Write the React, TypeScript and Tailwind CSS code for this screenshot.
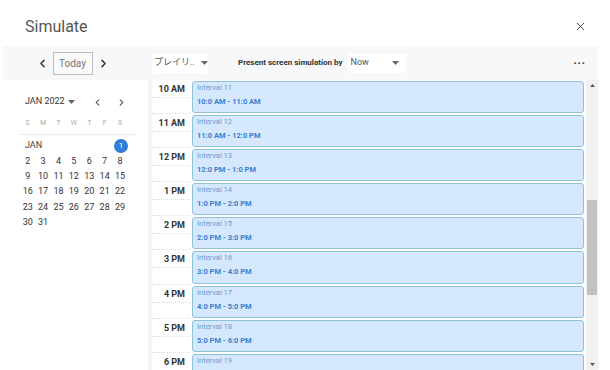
import { ChevronLeft, ChevronRight, X } from 'lucide-react';

const hours = ['10 AM', '11 AM', '12 PM', '1 PM', '2 PM', '3 PM', '4 PM', '5 PM', '6 PM'];
// last slot's time text falls below the fold, so it is left empty
const ranges = [
  '10:0 AM - 11:0 AM',
  '11:0 AM - 12:0 PM',
  '12:0 PM - 1:0 PM',
  '1:0 PM - 2:0 PM',
  '2:0 PM - 3:0 PM',
  '3:0 PM - 4:0 PM',
  '4:0 PM - 5:0 PM',
  '5:0 PM - 6:0 PM',
  '',
];

const weeks = [
  [2, 3, 4, 5, 6, 7, 8],
  [9, 10, 11, 12, 13, 14, 15],
  [16, 17, 18, 19, 20, 21, 22],
  [23, 24, 25, 26, 27, 28, 29],
  [30, 31],
];

function Caret() {
  return (
    <svg width="7" height="4" viewBox="0 0 7 4" className="fill-[#666]">
      <path d="M0 0h7L3.5 4z" />
    </svg>
  );
}

function MiniCalendar() {
  return (
    <div className="w-[145px] shrink-0 bg-white pt-[16px] pl-[14px] pr-[12px]">
      {/* month + arrows */}
      <div className="flex items-center h-[12px]">
        <span className="pl-[8px] text-[9px] text-[#333]">JAN 2022</span>
        <span className="ml-[3px]"><Caret /></span>
        <ChevronLeft className="ml-auto mr-[13px] w-[11px] h-[11px] text-[#333]" strokeWidth={2.2} />
        <ChevronRight className="mr-[9px] w-[11px] h-[11px] text-[#333]" strokeWidth={2.2} />
      </div>
      <div className="mt-[10px] ml-[2px] pl-[1px] pb-[5px] border-b border-[#ececec] grid grid-cols-[repeat(7,15.4px)] text-[7px] text-[#aaa]">
        {['S', 'M', 'T', 'W', 'T', 'F', 'S'].map((d, i) => (
          <span key={i} className="text-center">{d}</span>
        ))}
      </div>
      <div className="pl-[3px] pt-[4px] text-[9px] text-[#333]">
        <div className="flex items-center h-[15.3px] w-[108px]">
          <span className="pl-[5px] text-[9px] text-[#444]">JAN</span>
          <span className="ml-auto w-[14px] h-[14px] rounded-full bg-[#2e7fd9] text-white text-[8px] flex items-center justify-center">1</span>
        </div>
        {weeks.map((w, i) => (
          <div key={i} className="grid grid-cols-[repeat(7,15.4px)] h-[15.3px] items-center">
            {w.map((d) => (
              <span key={d} className="text-center">{d}</span>
            ))}
          </div>
        ))}
      </div>
    </div>
  );
}

function Row({ hour, idx }: { hour: string; idx: number }) {
  return (
    <div className="flex h-[34.1px] shrink-0">
      <div className="w-[38px] bg-white relative">
        <span className="absolute right-[5px] top-[3px] text-[9px] font-bold text-[#333]">{hour}</span>
        <div className="absolute left-0 right-0 top-[17px] border-t border-dotted border-[#ddd]" />
        <div className="absolute left-0 right-0 bottom-0 border-t border-dotted border-[#ddd]" />
      </div>
      <div className="flex-1 pl-[2px] py-[1px]">
        <div className="h-full rounded-[3px] border border-[#8ec1da] bg-[#d5e8fd] pl-[4px] pt-[1px]">
          <div className="text-[7.5px] leading-[10px] text-[#6d9ccf]">Interval {11 + idx}</div>
          {ranges[idx] && (
            <div className="mt-[4px] text-[7.5px] leading-[10px] font-bold text-[#3a7fcf]">{ranges[idx]}</div>
          )}
        </div>
      </div>
    </div>
  );
}

export default function App() {
  return (
    <div className="w-[610px] h-[370px] bg-white overflow-hidden relative" style={{ fontFamily: 'Roboto, "Noto Sans CJK JP", sans-serif' }}>
      {/* title bar */}
      <div className="h-[46px] flex items-center pl-[25px] pr-[23px]">
        <h1 className="text-[16px] text-[#555] mt-[7px]">Simulate</h1>
        <X className="ml-auto mt-[6px] w-[13px] h-[13px] text-[#444]" strokeWidth={1.8} />
      </div>

      {/* toolbar */}
      <div className="mx-[3px] mr-[12px] h-[34px] bg-[#f7f8fa] flex items-center">
        <div className="w-[145px] flex items-center justify-center gap-[4px] pr-[6px]">
          <ChevronLeft className="w-[13px] h-[13px] text-[#222]" strokeWidth={2.4} />
          <div className="h-[23px] w-[40px] border border-[#bdbdbd] bg-[#fafafa] flex items-center justify-center text-[10px] text-[#777]">
            Today
          </div>
          <ChevronRight className="w-[13px] h-[13px] text-[#222]" strokeWidth={2.4} />
        </div>
        <div className="ml-[4px] h-[19px] w-[56px] bg-white rounded-[2px] flex items-center pl-[2px] gap-[6px] text-[9px] text-[#555]">
          <span>プレイリ..</span>
          <Caret />
        </div>
        <span className="ml-[30px] text-[8px] font-bold text-[#333]">Present screen simulation by</span>
        <div className="ml-[5px] h-[19px] w-[58px] bg-white rounded-[2px] flex items-center pl-[3px] pr-[7px] text-[9px] text-[#555]">
          <span>Now</span>
          <span className="ml-auto"><Caret /></span>
        </div>
        <span className="ml-auto mr-[12px] text-[11px] font-bold text-[#333] tracking-[1px] -mt-[4px]">...</span>
      </div>

      {/* body */}
      <div className="flex h-[290px] mx-[3px] mr-[12px]">
        <MiniCalendar />
        <div className="w-[4px] shrink-0 bg-[#f4f5f7]" />
        <div className="flex-1 flex flex-col overflow-hidden">
          {hours.map((h, i) => (
            <Row key={h} hour={h} idx={i} />
          ))}
        </div>
        {/* scrollbar */}
        <div className="w-[12px] shrink-0 ml-[2px] bg-[#f1f1f1] flex flex-col items-center">
          <svg width="5" height="3" viewBox="0 0 5 3" className="mt-[4px] fill-[#555]"><path d="M0 3h5L2.5 0z" /></svg>
          <div className="mt-[113px] w-[10px] h-[95px] bg-[#c1c1c1]" />
          <svg width="5" height="3" viewBox="0 0 5 3" className="mt-auto mb-[4px] fill-[#555]"><path d="M0 0h5L2.5 3z" /></svg>
        </div>
      </div>
    </div>
  );
}
